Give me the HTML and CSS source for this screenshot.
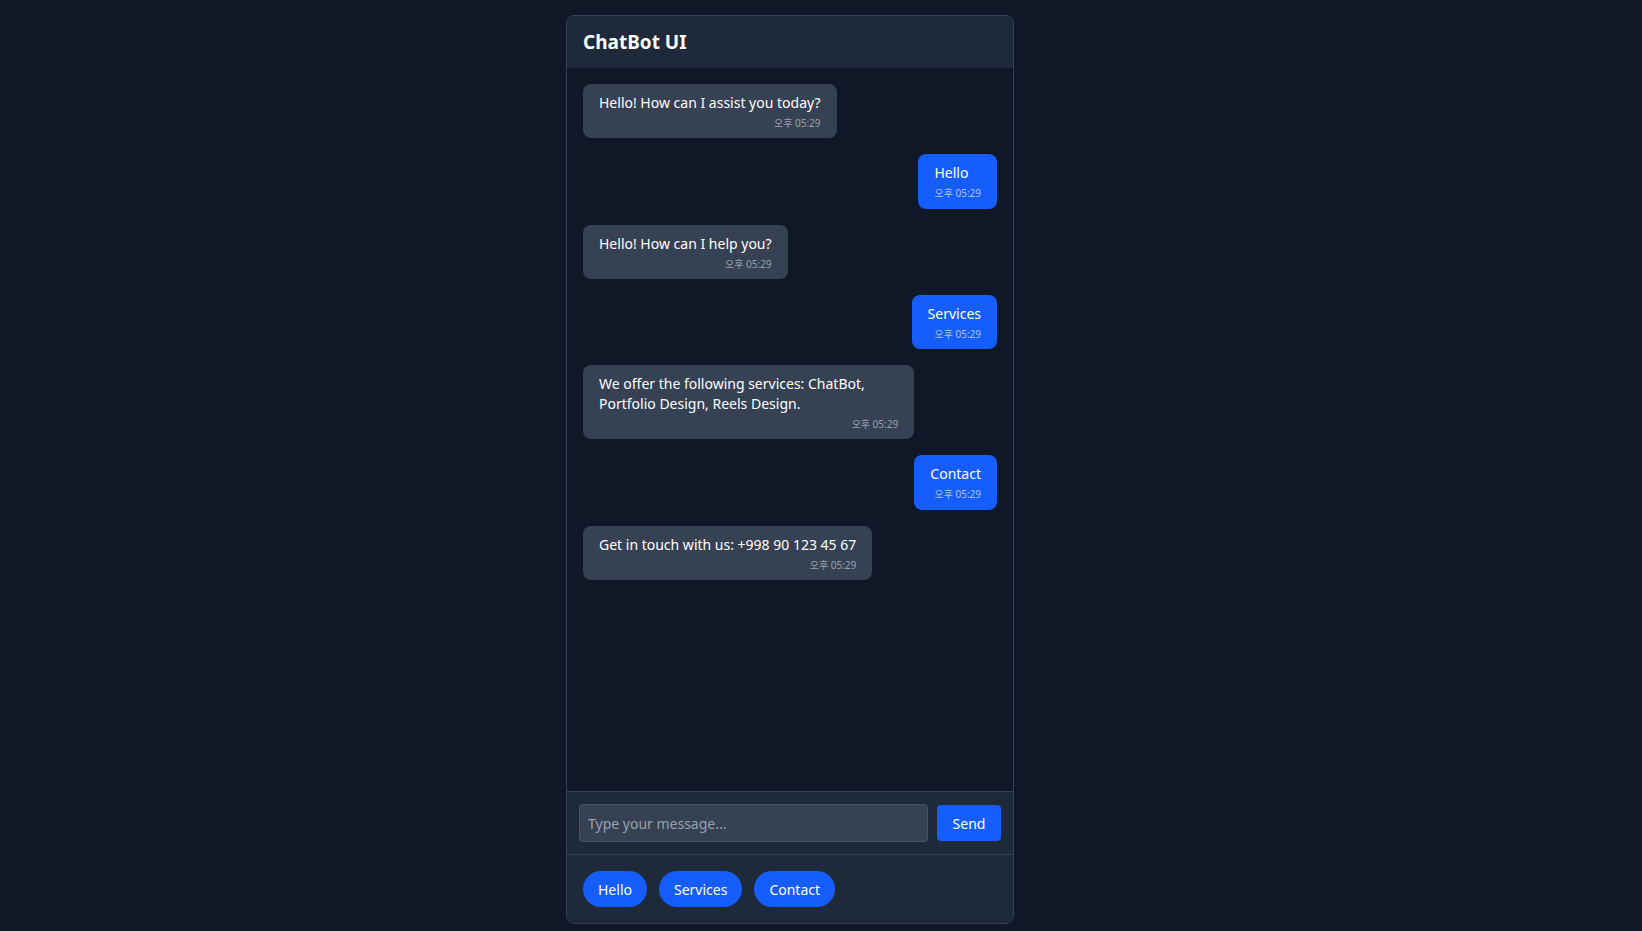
FILE: index.html
```html
<!DOCTYPE html>
<html lang="ko">
<head>
<meta charset="utf-8">
<title>ChatBot UI</title>
<link rel="stylesheet" href="styles.css">
</head>
<body>
<div class="chat">
  <header class="chat-header"><h1 class="title">ChatBot UI</h1></header>
  <main class="messages">
    <div class="msg bot"><div class="text">Hello! How can I assist you today?</div><div class="time">오후 05:29</div></div>
    <div class="msg user"><div class="text">Hello</div><div class="time">오후 05:29</div></div>
    <div class="msg bot"><div class="text">Hello! How can I help you?</div><div class="time">오후 05:29</div></div>
    <div class="msg user"><div class="text">Services</div><div class="time">오후 05:29</div></div>
    <div class="msg bot"><div class="text">We offer the following services: ChatBot, Portfolio Design, Reels Design.</div><div class="time">오후 05:29</div></div>
    <div class="msg user"><div class="text">Contact</div><div class="time">오후 05:29</div></div>
    <div class="msg bot"><div class="text">Get in touch with us: +998 90 123 45 67</div><div class="time">오후 05:29</div></div>
  </main>
  <div class="composer">
    <input class="input" type="text" placeholder="Type your message...">
    <button class="send">Send</button>
  </div>
  <div class="quick">
    <button class="chip">Hello</button>
    <button class="chip">Services</button>
    <button class="chip">Contact</button>
  </div>
</div>
</body>
</html>
```
FILE: styles.css
```css
* { box-sizing: border-box; }
html, body { margin: 0; height: 100%; }
body {
  background: #101828;
  font-family: "Noto Sans", "Noto Sans CJK KR", sans-serif;
  color: #fff;
  padding: 15px 0 0 566px;
}
.chat {
  width: 448px;
  height: 909px;
  display: flex;
  flex-direction: column;
  border: 1px solid #364153;
  border-radius: 8px;
  overflow: hidden;
  background: #101828;
}
.chat-header {
  background: #1e2939;
  padding: 12px 16px;
}
.title {
  margin: 0;
  font-size: 19px;
  line-height: 28px;
  font-weight: 700;
}
.messages {
  flex: 1;
  display: flex;
  flex-direction: column;
  gap: 16px;
  padding: 16px;
}
.msg {
  max-width: 80%;
  padding: 9px 16px 7.3px;
  border-radius: 8px;
  font-size: 14px;
  line-height: 20px;
}
.msg.bot { align-self: flex-start; background: #364153; }
.msg.user { align-self: flex-end; background: #155dfc; }
.time {
  margin-top: 2px;
  font-size: 10px;
  line-height: 16px;
  text-align: right;
  color: #99a1af;
}
.msg.user .time { color: #a9c2fb; }
.composer {
  display: flex;
  align-items: center;
  gap: 9px;
  padding: 12px;
  background: #1e2939;
  border-top: 1px solid #364153;
}
.input {
  flex: 1;
  height: 38px;
  background: #364153;
  border: 1px solid #4a5565;
  border-radius: 4px;
  padding: 0 8px;
  color: #fff;
  font: 14px "Noto Sans", "Noto Sans CJK KR", sans-serif;
  outline: none;
}
.input::placeholder { color: #99a1af; }
.send {
  width: 64px;
  height: 36px;
  background: #155dfc;
  border: 0;
  border-radius: 4px;
  color: #fff;
  font: 14px "Noto Sans", sans-serif;
}
.quick {
  display: flex;
  gap: 12px;
  padding: 16px;
  background: #1e2939;
  border-top: 1px solid #364153;
}
.chip {
  height: 36px;
  padding: 0 15px;
  background: #155dfc;
  border: 0;
  border-radius: 18px;
  color: #fff;
  font: 14px "Noto Sans", sans-serif;
}
```
